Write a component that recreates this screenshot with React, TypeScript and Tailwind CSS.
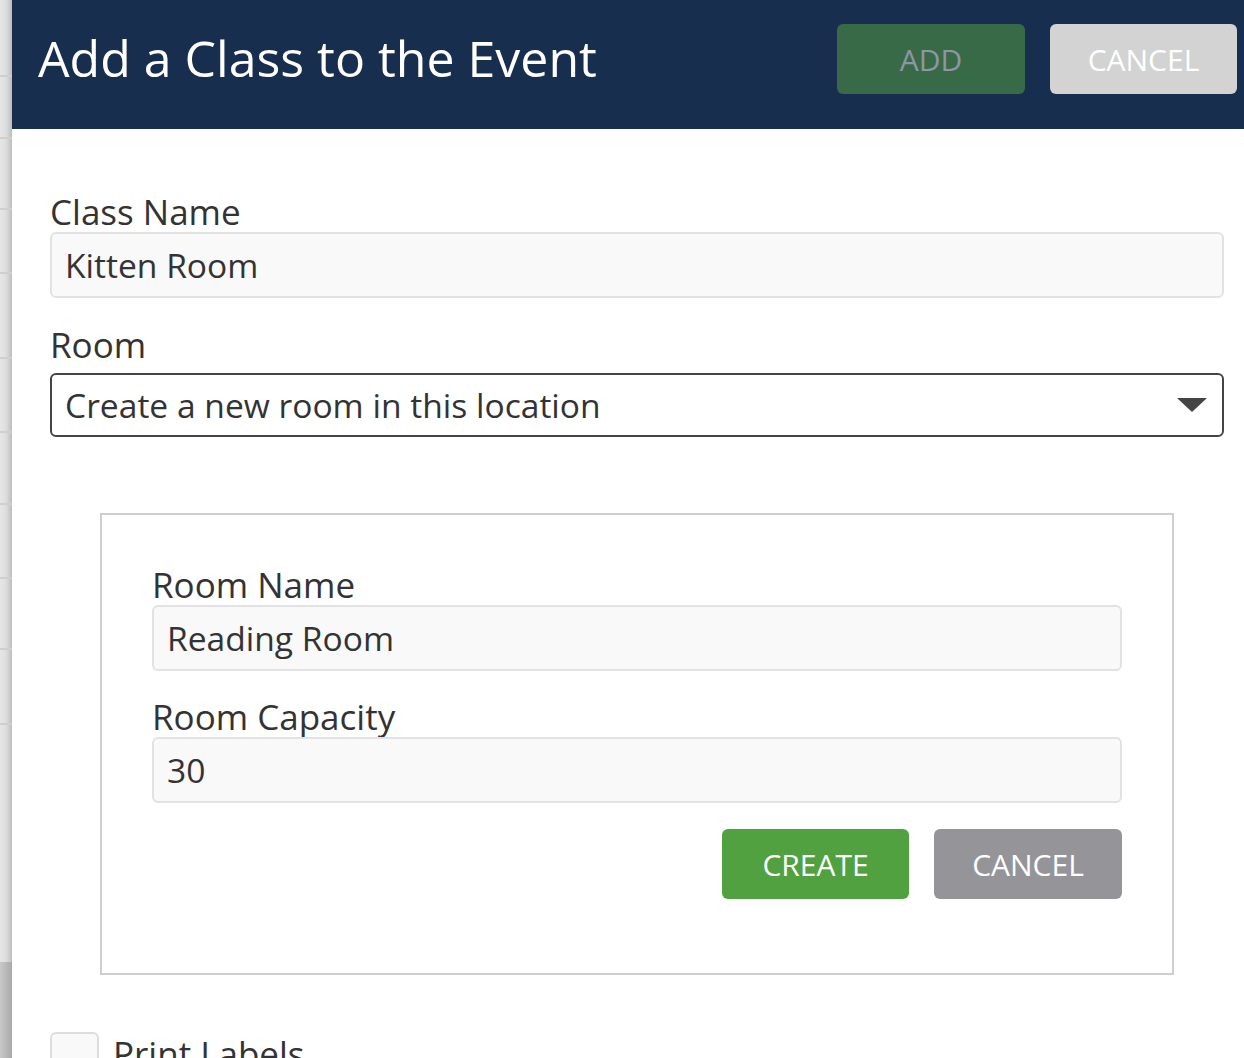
import React from 'react';

const rowLines = [75, 137, 208, 272, 357, 431, 503, 577, 648, 723];

const Field: React.FC<{ label: string; value: string }> = ({ label, value }) => (
  <div className="flex flex-col">
    <label className="text-[35px] leading-[40px] text-[#333]">{label}</label>
    <div className="h-[66px] rounded-[6px] border-2 border-[#e2e2e2] bg-[#f9f9f9] px-[13px] flex items-center text-[33.6px] text-[#333]">
      {value}
    </div>
  </div>
);

const App: React.FC = () => {
  return (
    <div
      className="w-[1244px] h-[1058px] overflow-hidden flex bg-white"
      style={{ fontFamily: '"Open Sans", "Noto Sans", sans-serif' }}
    >
      {/* page behind the dialog */}
      <div className="relative w-[12px] h-full shrink-0 bg-gradient-to-r from-[#e6e6e6] via-[#dedede] to-[#bdbdbd]">
        {rowLines.map((y) => (
          <div key={y} className="absolute left-0 w-full h-[2px] bg-[#cfcfcf]" style={{ top: y }} />
        ))}
        <div className="absolute left-0 w-full top-[962px] bottom-0 bg-gradient-to-r from-[#c9c9c9] to-[#a9a9a9]" />
      </div>

      <div className="flex-1 flex flex-col">
        <div className="h-[129px] shrink-0 bg-[#172e4f] flex items-center justify-between pl-[26px] pr-[7px]">
          <h1 className="text-[50px] text-white leading-none -mt-[14px]">Add a Class to the Event</h1>
          <div className="flex gap-[25px] -mt-[11px]">
            <button className="w-[188px] h-[70px] rounded-[6px] bg-[#386a48] text-[#8c97a6] text-[30px]">ADD</button>
            <button className="w-[187px] h-[70px] rounded-[6px] bg-[#d3d3d3] text-white text-[30px]">CANCEL</button>
          </div>
        </div>

        <div className="pl-[38px] pr-[20px] pt-[63px] flex flex-col shrink-0">
          <Field label="Class Name" value="Kitten Room" />

          <div className="flex flex-col mt-[27px]">
            <label className="text-[35px] leading-[40px] text-[#333]">Room</label>
            <div className="mt-[8px] h-[64px] rounded-[6px] border-2 border-[#444] bg-white pl-[13px] pr-[14px] flex items-center justify-between text-[33.6px] text-[#333]">
              <span>Create a new room in this location</span>
              <svg width="32" height="16" viewBox="0 0 32 16">
                <polygon points="1,1 31,1 16,15" fill="#444" />
              </svg>
            </div>
          </div>

          <div className="mt-[76px] ml-[50px] mr-[50px] h-[462px] border-2 border-[#cfcfcf] px-[50px] pt-[50px] flex flex-col shrink-0">
            <Field label="Room Name" value="Reading Room" />
            <div className="mt-[26px]">
              <Field label="Room Capacity" value="30" />
            </div>
            <div className="flex justify-end gap-[25px] mt-[26px]">
              <button className="w-[187px] h-[70px] rounded-[6px] bg-[#52a140] text-white text-[30px]">CREATE</button>
              <button className="w-[188px] h-[70px] rounded-[6px] bg-[#959599] text-white text-[30px]">CANCEL</button>
            </div>
          </div>

          <div className="mt-[57px] flex items-start gap-[14px]">
            <div className="w-[49px] h-[49px] shrink-0 rounded-[6px] border-2 border-[#ddd] bg-[#f9f9f9]" />
            <span className="text-[35px] leading-[40px] text-[#333] mt-[2px] whitespace-nowrap">Print Labels</span>
          </div>
        </div>
      </div>
    </div>
  );
};

export default App;
